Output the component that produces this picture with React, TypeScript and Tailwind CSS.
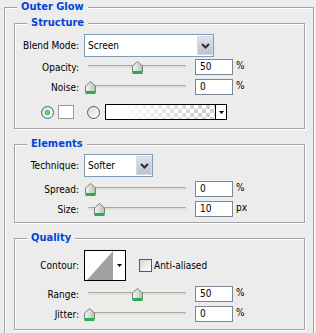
import React from "react";

function Thumb() {
  return (
    <svg width="11" height="13" viewBox="0 0 11 13">
      <defs>
        <linearGradient id="thg" x1="0" x2="1" y1="0" y2="0">
          <stop offset="0" stopColor="#f6f8f6" />
          <stop offset="1" stopColor="#b4c0b4" />
        </linearGradient>
      </defs>
      <path d="M5.5 0.5 L10.5 5 V11 H0.5 V5 Z" fill="url(#thg)" stroke="#728472" />
      <rect x="0.5" y="10" width="10" height="3" fill="#22b14c" />
    </svg>
  );
}

function Slider({ left }: { left: number }) {
  return (
    <div className="relative h-[20px] w-[107px]">
      <div className="absolute left-[4px] right-[5px] top-[8px] h-[3px] rounded-[1px] border-t border-[#a8a79b] bg-[#e2e0d2]" />
      <div className="absolute top-[4px]" style={{ left }}>
        <Thumb />
      </div>
    </div>
  );
}

function NumField({ value }: { value: string }) {
  return (
    <div className="h-[16px] w-[38px] border border-[#7c8795] bg-white pl-[4px] text-[10px] leading-[14px] text-black">
      {value}
    </div>
  );
}

function SliderRow({
  label,
  value,
  unit,
  thumb,
  className = "",
}: {
  label: string;
  value: string;
  unit: string;
  thumb: number;
  className?: string;
}) {
  return (
    <div className={`flex h-[20px] items-center ${className}`}>
      <div className="w-[64px] text-right">{label}</div>
      <div className="ml-[5px]">
        <Slider left={thumb} />
      </div>
      <div className="ml-[4px]">
        <NumField value={value} />
      </div>
      <div className="ml-[3px] -mt-[4px]">{unit}</div>
    </div>
  );
}

function Chevron() {
  return (
    <svg width="9" height="6" viewBox="0 0 9 6">
      <path d="M1 1 L4.5 4.5 L8 1" fill="none" stroke="#2a2f3c" strokeWidth="2" />
    </svg>
  );
}

function DownTri() {
  return (
    <svg width="5" height="3" viewBox="0 0 5 3">
      <path d="M0 0 H5 L2.5 3 Z" fill="#000" />
    </svg>
  );
}

function Select({ value, className }: { value: string; className: string }) {
  return (
    <div className={`flex h-[23px] border border-[#7f9db9] bg-white ${className}`}>
      <div className="flex-1 pl-[3px] text-[10px] leading-[21px]">{value}</div>
      <div className="my-[1px] flex w-[16px] items-center justify-center border border-[#d5d9e4] bg-[linear-gradient(180deg,#dfe2ea,#bcc1cf)]">
        <Chevron />
      </div>
    </div>
  );
}

function Radio({ checked }: { checked?: boolean }) {
  return (
    <div className="relative h-[13px] w-[13px] rounded-full border border-[#36618f] bg-[linear-gradient(135deg,#d8d8d2,#ffffff)]">
      {checked && (
        <div className="absolute left-[3px] top-[3px] h-[5px] w-[5px] rounded-full bg-[radial-gradient(circle,#7ee07e,#1e9e1e)]" />
      )}
    </div>
  );
}

function Group({
  title,
  className,
  children,
}: {
  title: string;
  className: string;
  children?: React.ReactNode;
}) {
  return (
    <div
      className={`relative border border-[#a3a3a3] shadow-[inset_1px_1px_0_#ffffff,1px_1px_0_#ffffff] ${className}`}
    >
      <span className="absolute left-[12px] top-[-8px] bg-[#ececec] px-[4px] text-[11px] font-bold leading-[13px] text-[#0046d5]">
        {title}
      </span>
      {children}
    </div>
  );
}

export default function App() {
  return (
    <div className="h-[333px] w-[316px] overflow-hidden bg-[#ececec] pl-[4px] pt-[7px] font-['DejaVu_Sans_Condensed','Liberation_Sans',sans-serif] text-[10px] text-black">
      <Group title="Outer Glow" className="h-[360px] w-[310px] px-[9px] pt-[15px]">
        <Group title="Structure" className="h-[106px] w-[291px] pt-[10px]">
          <div className="flex h-[23px] items-center">
            <div className="w-[64px] text-right">Blend Mode:</div>
            <Select value="Screen" className="ml-[5px] w-[130px]" />
          </div>
          <SliderRow label="Opacity:" value="50" unit="%" thumb={48} />
          <SliderRow label="Noise:" value="0" unit="%" thumb={1} />
          <div className="mt-[7px] flex h-[16px] items-center pl-[26px]">
            <Radio checked />
            <div className="ml-[4px] h-[14px] w-[16px] border border-[#9c9c9c] bg-white" />
            <div className="ml-[13px]">
              <Radio />
            </div>
            <div className="ml-[5px] flex h-[16px] w-[122px] border border-black">
              <div className="flex-1 bg-[repeating-conic-gradient(#d0d0d0_0_25%,#ffffff_0_50%)] bg-[length:8px_8px]">
                <div className="h-full w-full bg-[linear-gradient(to_right,#ffffff_15%,rgba(255,255,255,0)_85%)]" />
              </div>
              <div className="flex w-[11px] items-center justify-center border-l border-black bg-white">
                <DownTri />
              </div>
            </div>
          </div>
        </Group>

        <Group title="Elements" className="mt-[15px] h-[79px] w-[291px] pt-[9px]">
          <div className="flex h-[23px] items-center">
            <div className="w-[64px] text-right">Technique:</div>
            <Select value="Softer" className="ml-[5px] w-[69px]" />
          </div>
          <SliderRow label="Spread:" value="0" unit="%" thumb={1} className="mt-[2px]" />
          <SliderRow label="Size:" value="10" unit="px" thumb={10} />
        </Group>

        <Group title="Quality" className="mt-[15px] h-[92px] w-[291px] pt-[11px]">
          <div className="flex h-[31px] items-center">
            <div className="w-[64px] text-right">Contour:</div>
            <div className="ml-[5px] flex h-[31px] w-[42px] border border-black bg-white">
              <svg width="28" height="29" viewBox="0 0 28 29">
                <polygon points="2,29 28,0 28,29" fill="#a2a2a6" />
              </svg>
              <div className="flex flex-1 items-center justify-center">
                <DownTri />
              </div>
            </div>
            <div className="ml-[13px] h-[13px] w-[13px] border border-[#36618f] bg-[linear-gradient(135deg,#d8d8d2,#ffffff)]" />
            <div className="ml-[2px]">Anti-aliased</div>
          </div>
          <SliderRow label="Range:" value="50" unit="%" thumb={48} className="mt-[3px]" />
          <SliderRow label="Jitter:" value="0" unit="%" thumb={0} />
        </Group>
      </Group>
    </div>
  );
}
